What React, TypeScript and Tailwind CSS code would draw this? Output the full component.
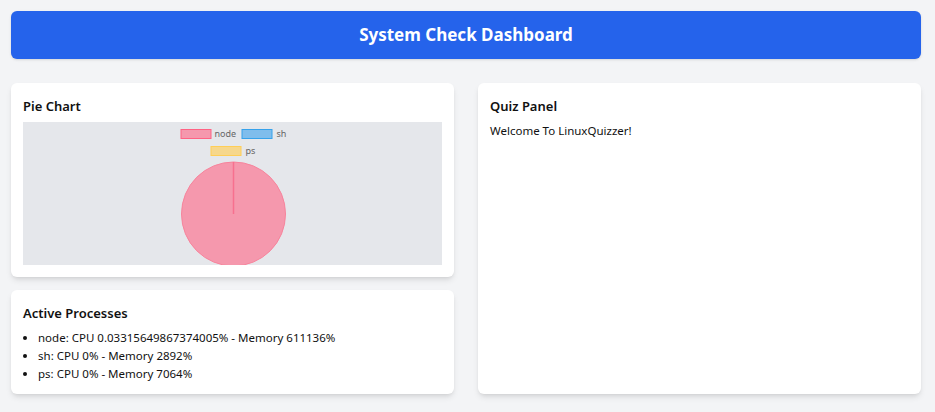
import React from 'react';

const processes = [
  { name: 'node', cpu: '0.03315649867374005', mem: '611136' },
  { name: 'sh', cpu: '0', mem: '2892' },
  { name: 'ps', cpu: '0', mem: '7064' },
];

const PieChart: React.FC = () => (
  <svg viewBox="0 0 418 143" className="block w-full h-[143px]">
    {/* legend */}
    <rect x="157.5" y="7.5" width="30" height="9" fill="#f598ad" stroke="#ff6384" />
    <text x="191" y="15" fontSize="9" fill="#666">node</text>
    <rect x="218.5" y="7.5" width="30" height="9" fill="#7fbdec" stroke="#36a2eb" />
    <text x="253" y="15" fontSize="9" fill="#666">sh</text>
    <rect x="187.5" y="24.5" width="30" height="9" fill="#f6d78c" stroke="#ffce56" />
    <text x="222" y="32" fontSize="9" fill="#666">ps</text>
    {/* pie */}
    <circle cx="210" cy="92" r="52" fill="#f598ad" stroke="#f7849c" strokeWidth="1" />
    <line x1="210" y1="92" x2="210" y2="40" stroke="#f7708f" strokeWidth="1.5" />
  </svg>
);

const App: React.FC = () => {
  return (
    <div className="min-h-screen bg-[#f3f4f6] pl-[11px] pr-[14px] pt-[11px] pb-[17px] text-[#111] font-['Noto_Sans',sans-serif]">
      <header className="h-[48px] flex items-center justify-center rounded-md bg-[#2563eb] shadow-sm">
        <h1 className="text-white text-[17px] font-bold">System Check Dashboard</h1>
      </header>

      <div className="mt-[24px] grid grid-cols-2 gap-x-[24px]">
        {/* left column */}
        <div className="flex flex-col gap-[13px]">
          <section className="bg-white rounded-md shadow-md p-[12px]">
            <h2 className="text-[13px] font-semibold leading-[20px] mb-[6px] pt-[1px]">Pie Chart</h2>
            <div className="bg-[#e5e7eb]">
              <PieChart />
            </div>
          </section>

          <section className="bg-white rounded-md shadow-md px-[12px] pt-[12px] pb-[11px]">
            <h2 className="text-[13px] font-semibold leading-[20px] mb-[6px] pt-[1px]">Active Processes</h2>
            <ul className="list-disc pl-[15px] text-[11.5px] leading-[18px]">
              {processes.map((p) => (
                <li key={p.name}>
                  {p.name}: CPU {p.cpu}% - Memory {p.mem}%
                </li>
              ))}
            </ul>
          </section>
        </div>

        {/* right column */}
        <section className="bg-white rounded-md shadow-md p-[12px]">
          <h2 className="text-[13px] font-semibold leading-[20px] mb-[6px] pt-[1px]">Quiz Panel</h2>
          <p className="text-[11.5px] leading-[18px]">Welcome To LinuxQuizzer!</p>
        </section>
      </div>
    </div>
  );
};

export default App;
